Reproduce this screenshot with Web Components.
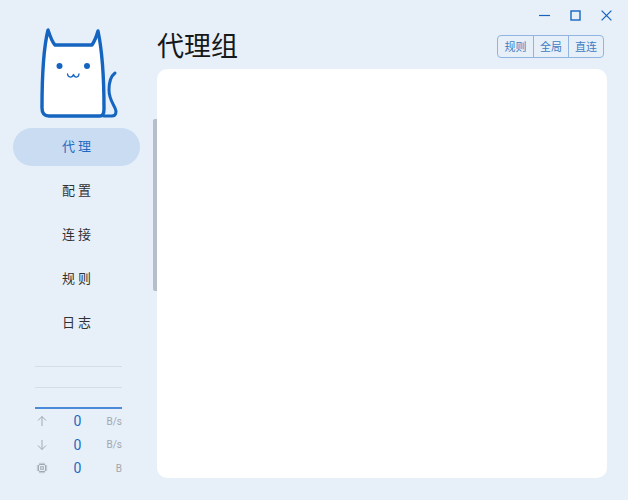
<!DOCTYPE html>
<html lang="zh">
<head>
<meta charset="utf-8">
<title>代理组</title>
<style>
  html, body { margin: 0; height: 100%; }
  body {
    background: #e7f0f9;
    font-family: Roboto, "Noto Sans CJK SC", sans-serif;
    overflow: hidden;
  }
</style>
</head>
<body>
<app-shell>
  <side-bar slot="side">
    <cat-logo></cat-logo>
    <nav-item active>代理</nav-item>
    <nav-item>配置</nav-item>
    <nav-item>连接</nav-item>
    <nav-item>规则</nav-item>
    <nav-item>日志</nav-item>
    <traffic-panel slot="bottom"></traffic-panel>
  </side-bar>
  <window-controls slot="controls"></window-controls>
  <page-header slot="header" title="代理组">
    <mode-switch></mode-switch>
  </page-header>
  <content-card slot="content"></content-card>
</app-shell>

<script>
class AppShell extends HTMLElement {
  constructor() {
    super();
    this.attachShadow({ mode: "open" }).innerHTML = `
      <style>
        :host { display: flex; width: 628px; height: 500px; position: relative; overflow: hidden; }
        .side { width: 157px; flex: none; }
        .main { flex: 1; display: flex; flex-direction: column; padding: 0 21px 22px 0; min-width: 0; }
        .top { height: 26px; flex: none; }
        .body { flex: 1; display: flex; min-height: 0; }
        .thumb { position: absolute; left: 153px; top: 119px; width: 4px; height: 172px; background: #b4bfcb; border-radius: 2px 0 0 2px; }
      </style>
      <div class="side"><slot name="side"></slot></div>
      <div class="main">
        <div class="top"><slot name="controls"></slot></div>
        <slot name="header"></slot>
        <div class="body"><slot name="content"></slot></div>
      </div>
      <div class="thumb"></div>
    `;
  }
}

class SideBar extends HTMLElement {
  constructor() {
    super();
    this.attachShadow({ mode: "open" }).innerHTML = `
      <style>
        :host { display: flex; flex-direction: column; height: 500px; box-sizing: border-box; padding: 28px 17px 0 13px; }
        .nav { display: flex; flex-direction: column; gap: 6px; margin-top: 9px; }
        .bottom { margin-top: 24px; }
      </style>
      <slot name="logo"></slot>
      <div class="nav"><slot></slot></div>
      <div class="bottom"><slot name="bottom"></slot></div>
    `;
    this.querySelector("cat-logo").slot = "logo";
  }
}

class CatLogo extends HTMLElement {
  constructor() {
    super();
    this.attachShadow({ mode: "open" }).innerHTML = `
      <style>
        :host { display: block; height: 91px; }
        svg { display: block; margin-left: 27px; }
      </style>
      <svg width="80" height="91" viewBox="40 28 80 91" fill="none" stroke="#1565c0" stroke-linecap="round" stroke-linejoin="round">
        <path d="M48 30 C45 42 42 62 42 108 C42 113 44 116 49 116 L100 116 C103 116 104 113 104 109 C104 75 102 50 98 31 C96 38 94 42 92 45 L55 45 C52 42 50 36 48 30 Z" fill="#fff" stroke-width="3.4"/>
        <path d="M104 116 L112 116 C116 116 117 112 115 108 C112 102 109 98 109 90 C109 82 111 76 115 73" stroke-width="3"/>
        <circle cx="59.5" cy="66" r="3" fill="#1565c0" stroke="none"/>
        <circle cx="87" cy="66" r="3" fill="#1565c0" stroke="none"/>
        <path d="M67.5 74 C68 78 72.5 78 73.5 74.5 C74.5 78 78.5 78 79 74" stroke-width="1.3"/>
      </svg>
    `;
  }
}

class NavItem extends HTMLElement {
  constructor() {
    super();
    this.attachShadow({ mode: "open" }).innerHTML = `
      <style>
        :host {
          display: flex; align-items: center; justify-content: center;
          height: 38px; box-sizing: border-box; padding: 0 0 4px 3px; border-radius: 19px;
          font-size: 13px; letter-spacing: 3px; color: #303133;
        }
        :host([active]) { background: #c9dcf2; color: #1f6ac0; }
      </style>
      <slot></slot>
    `;
  }
}

class TrafficPanel extends HTMLElement {
  constructor() {
    super();
    this.attachShadow({ mode: "open" }).innerHTML = `
      <style>
        :host { display: block; margin: 0 18px 0 22px; }
        .line { height: 1px; background: #d3dce7; margin-bottom: 20px; }
        .line + .line { margin-bottom: 19px; }
        .line.on { background: #4a8ad8; height: 1.5px; margin-bottom: 0; }
        .rows { padding-top: 1px; }
        .row { display: grid; grid-template-columns: 1fr 1fr 1fr; align-items: center; height: 23.5px; }
        svg { display: block; margin-left: 1px; }
        .val { text-align: center; font-size: 14px; color: #1f6ac0; margin-left: -2px; }
        .unit { text-align: right; font-size: 10px; color: #a3a7ad; }
      </style>
      <div class="line"></div>
      <div class="line"></div>
      <div class="line on"></div>
      <div class="rows">
        <div class="row">
          <svg width="12" height="12" viewBox="0 0 12 12" fill="none" stroke="#a0a8b2" stroke-width="1"><path d="M6 11V1.5M2 5.5l4-4 4 4"/></svg>
          <span class="val">0</span><span class="unit">B/s</span>
        </div>
        <div class="row">
          <svg width="12" height="12" viewBox="0 0 12 12" fill="none" stroke="#a0a8b2" stroke-width="1"><path d="M6 1v9.5M2 6.5l4 4 4-4"/></svg>
          <span class="val">0</span><span class="unit">B/s</span>
        </div>
        <div class="row">
          <svg width="12" height="12" viewBox="0 0 12 12" fill="none" stroke="#a0a8b2" stroke-width="1"><rect x="2.5" y="2.5" width="7" height="7" rx="1.5"/><rect x="4.7" y="4.7" width="2.6" height="2.6"/><path d="M4 .8v1.4M6 .8v1.4M8 .8v1.4M4 9.8v1.4M6 9.8v1.4M8 9.8v1.4M.8 4h1.4M.8 6h1.4M.8 8h1.4M9.8 4h1.4M9.8 6h1.4M9.8 8h1.4"/></svg>
          <span class="val">0</span><span class="unit">B</span>
        </div>
      </div>
    `;
  }
}

class WindowControls extends HTMLElement {
  constructor() {
    super();
    this.attachShadow({ mode: "open" }).innerHTML = `
      <style>
        :host { display: flex; justify-content: flex-end; height: 26px; padding-top: 10px; box-sizing: border-box; margin-right: -5px; }
        svg { display: block; margin-left: 20px; }
      </style>
      <svg width="11" height="11" viewBox="0 0 11 11" stroke="#1565c0" fill="none" stroke-width="1.2"><path d="M0 5.5h11"/></svg>
      <svg width="11" height="11" viewBox="0 0 11 11" stroke="#1565c0" fill="none" stroke-width="1.4"><rect x="1" y="1" width="9" height="9"/></svg>
      <svg width="11" height="11" viewBox="0 0 11 11" stroke="#1565c0" fill="none" stroke-width="1.3"><path d="M.6.6l9.8 9.8M10.4.6L.6 10.4"/></svg>
    `;
  }
}

class PageHeader extends HTMLElement {
  constructor() {
    super();
    this.attachShadow({ mode: "open" }).innerHTML = `
      <style>
        :host { display: flex; justify-content: space-between; align-items: flex-end; height: 43px; flex: none; }
        h1 { margin: 0 0 2px; font-weight: 400; font-size: 27px; line-height: 40px; color: #16181a; }
        .right { margin: 0 3px 11px 0; }
      </style>
      <h1>${this.getAttribute("title")}</h1>
      <div class="right"><slot></slot></div>
    `;
  }
}

class ModeSwitch extends HTMLElement {
  constructor() {
    super();
    this.attachShadow({ mode: "open" }).innerHTML = `
      <style>
        :host { display: flex; height: 23px; box-sizing: border-box; border: 1px solid #8fb5e0; border-radius: 4px; }
        span { width: 35px; box-sizing: border-box; display: flex; align-items: center; justify-content: center; padding-bottom: 1px; font-size: 11px; color: #3f7cc2; }
        span + span { border-left: 1px solid #8fb5e0; }
      </style>
      <span>规则</span><span>全局</span><span>直连</span>
    `;
  }
}

class ContentCard extends HTMLElement {
  constructor() {
    super();
    this.attachShadow({ mode: "open" }).innerHTML = `
      <style>
        :host { display: block; flex: 1; background: #fff; border-radius: 10px; }
      </style>
      <slot></slot>
    `;
  }
}

customElements.define("app-shell", AppShell);
customElements.define("side-bar", SideBar);
customElements.define("cat-logo", CatLogo);
customElements.define("nav-item", NavItem);
customElements.define("traffic-panel", TrafficPanel);
customElements.define("window-controls", WindowControls);
customElements.define("page-header", PageHeader);
customElements.define("mode-switch", ModeSwitch);
customElements.define("content-card", ContentCard);
</script>
</body>
</html>
